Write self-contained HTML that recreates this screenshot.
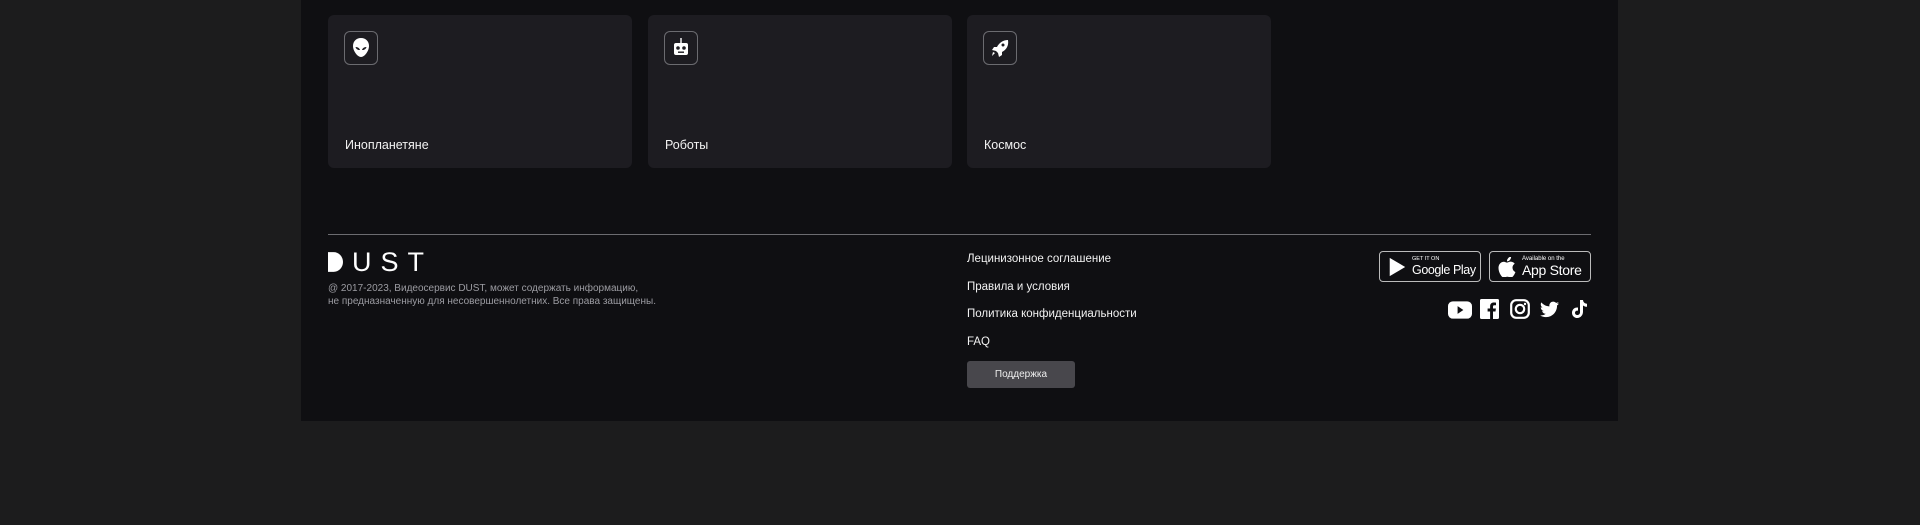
<!DOCTYPE html>
<html><head><meta charset="utf-8">
<style>
*{margin:0;padding:0;box-sizing:border-box}
html,body{width:1920px;height:525px;overflow:hidden}
body{background:#1c1c1d;font-family:"Liberation Sans","DejaVu Sans",sans-serif;color:#fff;position:relative}
.wrap{position:absolute;left:301px;top:0;width:1317px;height:421px;background:#0f0f12}
.card{position:absolute;top:15px;width:304px;height:153px;background:#1d1c21;border-radius:6px}
.ic{position:absolute;left:16px;top:16px;width:34px;height:34px;border:1px solid #6b6b70;border-radius:6px;display:flex;align-items:center;justify-content:center}
.ct{position:absolute;left:17px;top:123px;font-size:12.5px;color:#f2f2f2}
.line{position:absolute;left:27px;top:234px;width:1263px;height:1px;background:#6c6c70}
.logo{position:absolute;left:27px;top:249px;font-size:27px;letter-spacing:9px;font-weight:300;color:#fff;line-height:26px;white-space:nowrap}
.copy{position:absolute;left:27px;top:282px;font-size:10px;line-height:13px;color:#9c9ca2;white-space:nowrap}
.links{position:absolute;left:666px;top:253px;font-size:11.5px;color:#f2f2f2;white-space:nowrap}
.links div{height:27.5px}
.btn{position:absolute;left:666px;top:361px;width:108px;height:27px;background:#48474c;border-radius:3px;font-size:10px;color:#eee;display:flex;align-items:center;justify-content:center}
.badge{position:absolute;top:251px;width:102px;height:31px;border:1px solid #bbb;border-radius:4px;display:flex;align-items:center;white-space:nowrap}
.soc{position:absolute;top:299px}
</style></head><body>
<div class="wrap">
 <div class="card" style="left:27px"><div class="ic">
  <svg width="20" height="22" viewBox="0 0 20 22"><path d="M10 1C5 1 2 4.5 2 9c0 5 4.5 11 8 11s8-6 8-11c0-4.5-3-8-8-8z" fill="#fff"/><path d="M4.5 10c2 0 4 1 4.5 3-2 .3-4-1-4.5-3zM15.5 10c-2 0-4 1-4.5 3 2 .3 4-1 4.5-3z" fill="#1d1c21"/></svg></div>
  <div class="ct">Инопланетяне</div></div>
 <div class="card" style="left:347px"><div class="ic">
  <svg width="20" height="22" viewBox="0 0 20 22"><rect x="9.3" y="1" width="1.4" height="5" fill="#fff"/><rect x="3" y="6" width="14" height="12" rx="2" fill="#fff"/><circle cx="7" cy="11" r="1.8" fill="#1d1c21"/><circle cx="13" cy="11" r="1.8" fill="#1d1c21"/><rect x="7" y="14.5" width="6" height="1.4" fill="#1d1c21"/></svg></div>
  <div class="ct">Роботы</div></div>
 <div class="card" style="left:666px"><div class="ic">
  <svg width="20" height="20" viewBox="0 0 20 20"><path d="M18 2c-5 0-9 3-11 7L4 9l-2 3 4 1 2 2 1 4 3-2v-3c4-2 7-6 6-12zM13 5.5a1.5 1.5 0 1 1 0 3 1.5 1.5 0 0 1 0-3z" fill="#fff"/><path d="M5 15l-3 3 1-4z" fill="#fff"/></svg></div>
  <div class="ct">Космос</div></div>
 <div class="line"></div>
 <div class="logo"><svg width="15" height="20" viewBox="0 0 16 21" style="vertical-align:-1px;margin-right:9px"><path d="M0 0h6a10 10.5 0 0 1 0 21H0z" fill="#fff"/></svg>UST</div>
 <div class="copy">@ 2017-2023, Видеосервис DUST, может содержать информацию,<br>не предназначенную для несовершеннолетних. Все права защищены.</div>
 <div class="links"><div>Лецинизонное соглашение</div><div>Правила и условия</div><div>Политика конфиденциальности</div><div>FAQ</div></div>
 <div class="btn">Поддержка</div>
 <div class="badge" style="left:1078px"><svg width="20" height="22" viewBox="0 0 22 22" style="margin:0 5px 0 7px"><path d="M3 1l17 10L3 21z" fill="#fff"/></svg><div><div style="font-size:5.5px;line-height:7px">GET IT ON</div><div style="font-size:12.5px;line-height:14px;letter-spacing:-.4px">Google Play</div></div></div>
 <div class="badge" style="left:1188px"><svg width="18" height="20" viewBox="0 0 18 20" style="margin:0 6px 0 8px"><path d="M14.5 10.6c0-2.6 2.1-3.8 2.2-3.9-1.2-1.8-3.1-2-3.7-2-1.6-.2-3.1.9-3.9.9-.8 0-2-.9-3.4-.9C3.9 4.8 2.3 5.8 1.4 7.4c-1.9 3.2-.5 8 1.3 10.6.9 1.3 1.9 2.7 3.3 2.6 1.3-.1 1.8-.8 3.4-.8s2 .8 3.4.8c1.4 0 2.3-1.3 3.2-2.6 1-1.5 1.4-2.9 1.4-3-.1 0-2.8-1.1-2.9-4.4zM12 2.9c.7-.9 1.2-2.1 1.1-3.3-1 0-2.3.7-3 1.6-.7.8-1.3 2-1.1 3.2 1.1.1 2.3-.6 3-1.5z" fill="#fff"/></svg><div><div style="font-size:6px;line-height:7px">Available on the</div><div style="font-size:14px;line-height:14px;letter-spacing:-.3px">App Store</div></div></div>
 <svg class="soc" style="left:1147px;top:301px" width="24" height="18" viewBox="0 0 25 18"><rect width="25" height="18" rx="5" fill="#fff"/><path d="M10 5l6 4-6 4z" fill="#0f0f12"/></svg>
 <svg class="soc" style="left:1179px" width="19" height="20" viewBox="0 0 19 20"><rect width="19" height="20" rx="1.5" fill="#fff"/><path d="M13 20v-7.5h2.5l.4-3H13V7.7c0-.8.3-1.4 1.4-1.4H16V3.6c-.3 0-1.2-.1-2.2-.1-2.2 0-3.7 1.3-3.7 3.8v2.2H7.6v3h2.5V20z" fill="#0f0f12"/></svg>
 <svg class="soc" style="left:1209px" width="20" height="20" viewBox="0 0 20 20"><rect x="1.2" y="1.2" width="17.6" height="17.6" rx="5" fill="none" stroke="#fff" stroke-width="2.2"/><circle cx="10" cy="10" r="4.2" fill="none" stroke="#fff" stroke-width="2.2"/><circle cx="15" cy="5" r="1.2" fill="#fff"/></svg>
 <svg class="soc" style="left:1239px;top:301px" width="19" height="17" viewBox="0 0 24 20"><path d="M24 2.4c-.9.4-1.8.7-2.8.8 1-.6 1.8-1.6 2.2-2.7-1 .6-2 1-3.1 1.2C19.4.7 18.1.1 16.7.1c-2.7 0-4.9 2.2-4.9 4.9 0 .4 0 .8.1 1.1C7.8 5.9 4.2 4 1.7 1 1.3 1.7 1 2.6 1 3.5c0 1.7.9 3.2 2.2 4.1-.8 0-1.6-.2-2.2-.6v.1c0 2.4 1.7 4.4 3.9 4.8-.4.1-.8.2-1.3.2-.3 0-.6 0-.9-.1.6 2 2.4 3.4 4.6 3.4-1.7 1.3-3.8 2.1-6.1 2.1-.4 0-.8 0-1.2-.1 2.2 1.4 4.8 2.2 7.5 2.200 9.1 0 14-7.5 14-14v-.6c1-.7 1.8-1.6 2.5-2.6z" fill="#fff"/></svg>
 <svg class="soc" style="left:1271px;top:300px" width="15" height="18" viewBox="0 0 15 18"><path d="M8 0h3c.2 2.2 1.7 3.6 4 3.8v3c-1.5 0-2.8-.5-4-1.3v6.3C11 15 8.7 18 5.3 18 2.3 18 0 15.7 0 12.7s2.6-5.6 6-5.1v3.1c-1.5-.4-3 .5-3 2s1 2.300 2.3 2.3S8 14 8 12.5z" fill="#fff"/></svg>
</div>
</body></html>
